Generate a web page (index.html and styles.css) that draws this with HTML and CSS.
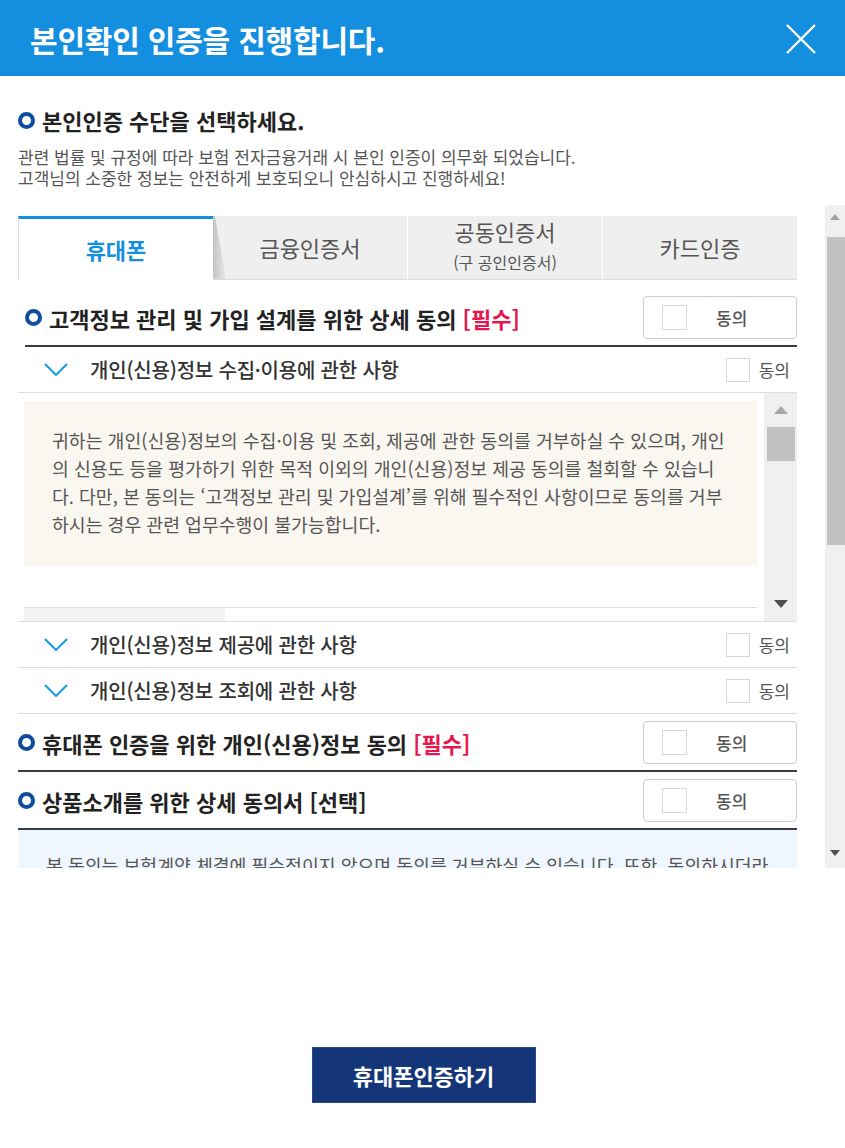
FILE: index.html
```html
<!doctype html>
<html lang="ko">
<head>
    <meta charset="utf-8">
    <title>본인확인 인증</title>
    <link rel="stylesheet" href="styles.css">
</head>
<body>
<div class="popup">
    <div class="popup-header">
        <h1>본인확인 인증을 진행합니다.</h1>
        <button type="button" class="btn-close" aria-label="닫기">
            <svg width="30" height="30" viewBox="0 0 30 30"><path d="M1 1L29 29M29 1L1 29" stroke="#fff" stroke-width="2.4" fill="none"/></svg>
        </button>
    </div>

    <div class="intro">
        <h2 class="title-dot">본인인증 수단을 선택하세요.</h2>
        <p>관련 법률 및 규정에 따라 보험 전자금융거래 시 본인 인증이 의무화 되었습니다.<br>고객님의 소중한 정보는 안전하게 보호되오니 안심하시고 진행하세요!</p>
    </div>

    <div class="scroll-wrap">
        <div class="scroll-area">
            <!-- 인증수단 탭 -->
            <ul class="tabs">
                <li class="on">휴대폰</li>
                <li>금융인증서</li>
                <li>공동인증서<span>(구 공인인증서)</span></li>
                <li>카드인증</li>
            </ul>

            <!-- 고객정보 관리 동의 -->
            <div class="agree-head first">
                <h3 class="title-dot">고객정보 관리 및 가입 설계를 위한 상세 동의&nbsp;<em>[필수]</em></h3>
                <label class="agree-box"><input type="checkbox">동의</label>
            </div>
            <div class="agree-item">
                <svg class="arrow" width="24" height="13" viewBox="0 0 24 13"><polyline points="1,1 12,12 23,1" fill="none" stroke="#1a9be6" stroke-width="2"/></svg>
                <span class="item-name">개인(신용)정보 수집·이용에 관한 사항</span>
                <label class="agree-check"><input type="checkbox">동의</label>
            </div>
            <div class="terms-box">
                <div class="terms-content">
                    <div class="notice">귀하는 개인(신용)정보의 수집·이용 및 조회, 제공에 관한 동의를 거부하실 수 있으며, 개인의 신용도 등을 평가하기 위한 목적 이외의 개인(신용)정보 제공 동의를 철회할 수 있습니다. 다만, 본 동의는 ‘고객정보 관리 및 가입설계’를 위해 필수적인 사항이므로 동의를 거부하시는 경우 관련 업무수행이 불가능합니다.</div>
                    <table class="terms-table">
                        <tr><th></th><td></td></tr>
                    </table>
                </div>
                <div class="scrollbar scrollbar-sm">
                    <span class="sb-btn up"></span>
                    <span class="sb-thumb"></span>
                    <span class="sb-btn down"></span>
                </div>
            </div>
            <div class="agree-item">
                <svg class="arrow" width="24" height="13" viewBox="0 0 24 13"><polyline points="1,1 12,12 23,1" fill="none" stroke="#1a9be6" stroke-width="2"/></svg>
                <span class="item-name">개인(신용)정보 제공에 관한 사항</span>
                <label class="agree-check"><input type="checkbox">동의</label>
            </div>
            <div class="agree-item">
                <svg class="arrow" width="24" height="13" viewBox="0 0 24 13"><polyline points="1,1 12,12 23,1" fill="none" stroke="#1a9be6" stroke-width="2"/></svg>
                <span class="item-name">개인(신용)정보 조회에 관한 사항</span>
                <label class="agree-check"><input type="checkbox">동의</label>
            </div>

            <!-- 휴대폰 인증 동의 -->
            <div class="agree-head">
                <h3 class="title-dot">휴대폰 인증을 위한 개인(신용)정보 동의&nbsp;<em>[필수]</em></h3>
                <label class="agree-box"><input type="checkbox">동의</label>
            </div>

            <!-- 상품소개 동의 -->
            <div class="agree-head">
                <h3 class="title-dot">상품소개를 위한 상세 동의서 [선택]</h3>
                <label class="agree-box"><input type="checkbox">동의</label>
            </div>
            <div class="notice notice-blue">본 동의는 보험계약 체결에 필수적이지 않으며 동의를 거부하실 수 있습니다. 또한, 동의하시더라도 언제든지 철회하실 수 있습니다.</div>
        </div>
        <div class="scrollbar">
            <span class="sb-btn up"></span>
            <span class="sb-thumb"></span>
            <span class="sb-btn down"></span>
        </div>
    </div>

    <div class="btn-area">
        <button type="button" class="btn-confirm">휴대폰인증하기</button>
    </div>
</div>
</body>
</html>
```

FILE: styles.css
```css
body {
    margin: 0;
    padding: 0;
    font-family: "Noto Sans CJK KR", "Noto Sans", sans-serif;
    color: #333;
    background-color: #ffffff;
}
.popup-header {
    height: 76px;
    box-sizing: border-box;
    background-color: #148fe0;
    display: flex;
    align-items: center;
    justify-content: space-between;
    padding: 2px 29px 0 30px;
}
h1 {
    margin: 0;
    color: #ffffff;
    font-size: 30px;
    font-weight: 700;
    letter-spacing: -0.2px;
}
.btn-close {
    border: 0;
    background: none;
    padding: 0;
    width: 30px;
    height: 30px;
    cursor: pointer;
}
.btn-close svg {
    display: block;
}

input[type="checkbox"] {
    -webkit-appearance: none;
    appearance: none;
    width: 25px;
    height: 25px;
    margin: 0;
    border: 1px solid #d8d8d8;
    background-color: #ffffff;
}

/* 파란 원 아이콘 제목 */
.title-dot {
    display: flex;
    align-items: center;
    margin: 0;
    color: #222;
    font-weight: 700;
}
.title-dot::before {
    content: "";
    flex: none;
    width: 17px;
    height: 17px;
    box-sizing: border-box;
    border: 4px solid #0e4d9e;
    border-radius: 50%;
    margin-right: 7px;
}

.intro {
    padding: 29px 18px 0;
}
.intro h2 {
    font-size: 22px;
    line-height: 30px;
}
.intro p {
    margin: 11px 0 17px;
    font-size: 17px;
    line-height: 21px;
    color: #555;
}

/* 스크롤 영역 (스크롤바 직접 그림) */
.scroll-wrap {
    display: flex;
    height: 663px;
}
.scroll-area {
    flex: 1;
    overflow: hidden;
    padding: 11px 28px 0 18px;
}
.scrollbar {
    flex: none;
    display: flex;
    flex-direction: column;
    width: 20px;
    background-color: #f0f0f0;
}
.sb-btn {
    flex: none;
    display: flex;
    align-items: center;
    justify-content: center;
    height: 24px;
}
.sb-btn::after {
    content: "";
    border-left: 5px solid transparent;
    border-right: 5px solid transparent;
}
.sb-btn.up {
    height: 32px;
    box-sizing: border-box;
    align-items: flex-start;
    padding-top: 9px;
}
.sb-btn.up::after {
    border-bottom: 6px solid #a3a3a3;
}
.sb-btn.down {
    margin-top: auto;
    height: 30px;
}
.sb-btn.down::after {
    border-top: 6px solid #505050;
}
.sb-thumb {
    height: 308px;
    margin-left: 2px;
    background-color: #c1c1c1;
}

.tabs {
    display: flex;
    list-style: none;
    margin: 0;
    padding: 0;
    height: 64px;
}
.tabs li {
    position: relative;
    flex: 1;
    display: flex;
    flex-direction: column;
    align-items: center;
    justify-content: center;
    background-color: #efefef;
    border-left: 1px solid #ffffff;
    border-bottom: 1px solid #dcdcdc;
    color: #555;
    font-size: 22px;
    line-height: 29px;
}
.tabs li span {
    font-size: 16px;
    line-height: 33px;
}
.tabs li.on {
    background-color: #ffffff;
    border-top: 3px solid #148fe0;
    border-left: 1px solid #dcdcdc;
    border-bottom: 0;
    color: #148fe0;
    font-weight: 700;
}
.tabs li.on + li {
    border-left: 0;
}
.tabs li.on + li::before {
    content: "";
    position: absolute;
    left: 0;
    top: 0;
    bottom: 0;
    width: 13px;
    background: linear-gradient(to right, #c4c4c4, #e6e6e6);
    clip-path: polygon(0 0, 2px 0, 13px 100%, 0 100%);
}

/* 동의 항목 */
.agree-head {
    display: flex;
    align-items: center;
    justify-content: space-between;
    padding: 7px 0 6px;
    border-bottom: 2px solid #3c3c3c;
}
.agree-head.first {
    margin: 9px 0 0 7px;
}
.agree-head h3 {
    font-size: 22px;
    line-height: 30px;
}
.agree-head em {
    font-style: normal;
    color: #e4184f;
}
.agree-box {
    display: flex;
    align-items: center;
    width: 154px;
    height: 43px;
    box-sizing: border-box;
    padding-left: 18px;
    border: 1px solid #cccccc;
    border-radius: 4px;
    font-size: 17px;
    font-weight: 500;
    color: #555;
}
.agree-box input {
    margin-right: 29px;
}

.agree-item {
    display: flex;
    align-items: center;
    height: 46px;
    box-sizing: border-box;
    padding: 0 7px 0 26px;
    border-bottom: 1px solid #dddddd;
}
.agree-item .arrow {
    flex: none;
    margin-right: 22px;
}
.item-name {
    flex: 1;
    font-size: 20px;
    font-weight: 500;
    letter-spacing: -0.2px;
    color: #333;
}
.agree-check {
    display: flex;
    align-items: center;
    font-size: 17px;
    color: #555;
}
.agree-check input {
    width: 24px;
    height: 24px;
    margin-right: 9px;
}

/* 약관 박스 */
.terms-box {
    display: flex;
    height: 229px;
    box-sizing: border-box;
    border-bottom: 1px solid #dddddd;
}
.terms-content {
    flex: 1;
    overflow: hidden;
    padding: 8px 7px 0 6px;
}
.scrollbar-sm {
    width: 33px;
}
.scrollbar-sm .sb-btn,
.scrollbar-sm .sb-btn.up {
    height: 34px;
    padding-top: 0;
    align-items: center;
}
.scrollbar-sm .sb-btn::after {
    border-left-width: 7px;
    border-right-width: 7px;
}
.scrollbar-sm .sb-btn.up::after {
    border-bottom-width: 8px;
    border-bottom-color: #a8a8a8;
}
.scrollbar-sm .sb-btn.down::after {
    border-top-width: 8px;
}
.scrollbar-sm .sb-thumb {
    height: 34px;
    margin: 0 2px 0 3px;
}
.notice {
    background-color: #faf6f0;
    padding: 25px 21px 28px 28px;
    font-size: 18.3px;
    line-height: 28px;
    color: #555;
    word-break: break-all;
}
.notice-blue {
    background-color: #f0f6fd;
    padding: 21px 28px 26px;
}
.terms-table {
    width: 100%;
    margin-top: 41px;
    border-collapse: collapse;
    border-top: 1px solid #dddddd;
}
.terms-table th, .terms-table td {
    height: 60px;
    padding: 0;
    border-bottom: 1px solid #e5e5e5;
}
.terms-table th {
    width: 201px;
    background-color: #f3f3f3;
}

.btn-area {
    text-align: center;
    margin-top: 179px;
    padding-left: 2px;
}
.btn-confirm {
    width: 224px;
    height: 56px;
    background-color: #143679;
    border: 1px solid #2a4a8a;
    color: #ffffff;
    font-family: inherit;
    font-size: 22px;
    font-weight: 700;
    cursor: pointer;
}
```
